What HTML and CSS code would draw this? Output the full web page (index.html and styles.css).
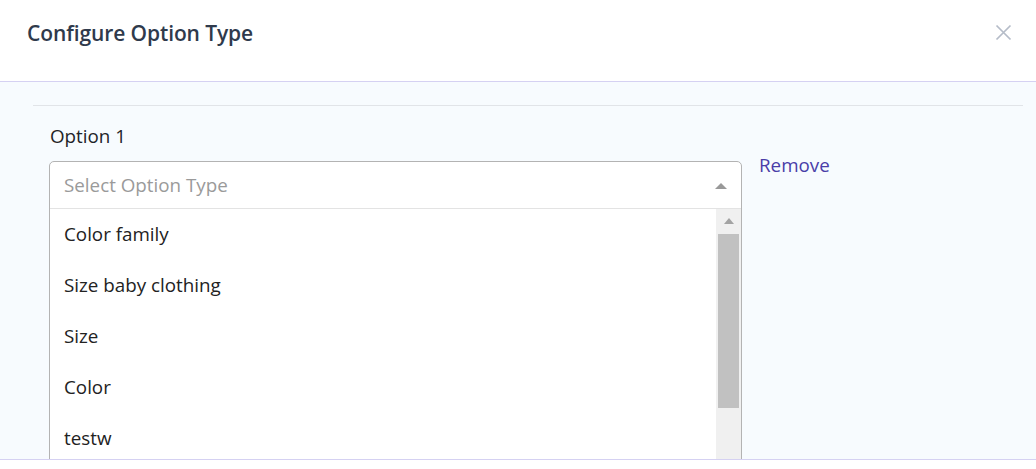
FILE: index.html
```html
<!DOCTYPE html>
<html>
<head>
<meta charset="utf-8">
<link rel="stylesheet" href="styles.css">
</head>
<body>
<div class="modal">
  <header class="modal-header">
    <h1 class="title">Configure Option Type</h1>
    <button class="close" aria-label="Close">
      <svg width="17" height="17" viewBox="0 0 17 17"><path d="M1.5 1.5 L15.5 15.5 M15.5 1.5 L1.5 15.5" stroke="#b5bcc8" stroke-width="1.7" fill="none"/></svg>
    </button>
  </header>
  <section class="modal-body">
    <div class="divider"></div>
    <div class="option-row">
      <div class="field">
        <label class="label">Option 1</label>
        <div class="select">
          <div class="control">
            <span class="placeholder">Select Option Type</span>
            <span class="caret"></span>
          </div>
          <div class="menu">
            <ul class="items">
              <li class="item">Color family</li>
              <li class="item">Size baby clothing</li>
              <li class="item">Size</li>
              <li class="item">Color</li>
              <li class="item">testw</li>
            </ul>
            <div class="scrollbar">
              <span class="sb-up"></span>
              <div class="sb-thumb"></div>
            </div>
          </div>
        </div>
      </div>
      <a class="remove" href="#">Remove</a>
    </div>
  </section>
  <footer class="modal-footer"></footer>
</div>
</body>
</html>
```

FILE: styles.css
```css
* { box-sizing: border-box; }
html, body { margin: 0; padding: 0; }
body {
  font-family: "Open Sans", "Noto Sans", sans-serif;
  background: #ffffff;
  width: 1036px;
  height: 469px;
  overflow: hidden;
}
.modal { display: flex; flex-direction: column; }
.modal-header {
  height: 82px;
  display: flex;
  align-items: flex-start;
  justify-content: space-between;
  padding: 19px 21px 0 27px;
  border-bottom: 1px solid #d5d1f2;
  background: #fff;
}
.title {
  margin: 0;
  font-size: 21px;
  line-height: 28px;
  font-weight: 600;
  color: #2f3a4c;
  letter-spacing: -0.1px;
}
.close {
  border: 0;
  background: none;
  padding: 0;
  width: 24px;
  height: 24px;
  display: flex;
  align-items: center;
  justify-content: center;
  margin-top: 1px;
}
.modal-body {
  height: 378px;
  background: #f7fbfe;
  border-bottom: 1px solid #d5d1f2;
  padding: 23px 13px 0 33px;
  overflow: hidden;
}
.divider { height: 1px; background: #e1e4e8; }
.option-row {
  display: flex;
  align-items: flex-start;
  gap: 17px;
  padding: 17px 0 0 16px;
}
.field { width: 693px; display: flex; flex-direction: column; }
.label {
  font-size: 18.8px;
  line-height: 27px;
  color: #1f2328;
  margin-bottom: 11px;
  padding-left: 1px;
}
.select {
  border: 1px solid #b3b3b3;
  border-radius: 5px 5px 0 0;
  background: #fff;
}
.control {
  height: 47px;
  display: flex;
  align-items: center;
  justify-content: space-between;
  padding: 0 14px 0 14px;
  border-bottom: 1px solid #e3e3e3;
}
.placeholder { font-size: 18.8px; color: #9a9a9a; }
.caret {
  width: 0; height: 0;
  border-left: 6px solid transparent;
  border-right: 6px solid transparent;
  border-bottom: 6px solid #999;
  margin-top: 2px;
}
.menu { display: flex; height: 320px; }
.items { list-style: none; margin: 0; padding: 0; flex: 1; }
.item {
  height: 51px;
  display: flex;
  align-items: center;
  padding: 0 0 1px 14px;
  font-size: 18.8px;
  color: #222;
}
.scrollbar {
  width: 25px;
  background: #f0f0f0;
  display: flex;
  flex-direction: column;
  align-items: center;
  padding-top: 9px;
}
.sb-up {
  width: 0; height: 0;
  border-left: 5px solid transparent;
  border-right: 5px solid transparent;
  border-bottom: 6px solid #a3a3a3;
}
.sb-thumb {
  margin-top: 10px;
  width: 21px;
  height: 174px;
  background: #c1c1c1;
}
.remove {
  margin-top: 29px;
  font-size: 18.8px;
  color: #4a3da8;
  text-decoration: none;
}
.modal-footer { height: 9px; background: #fff; }
```
